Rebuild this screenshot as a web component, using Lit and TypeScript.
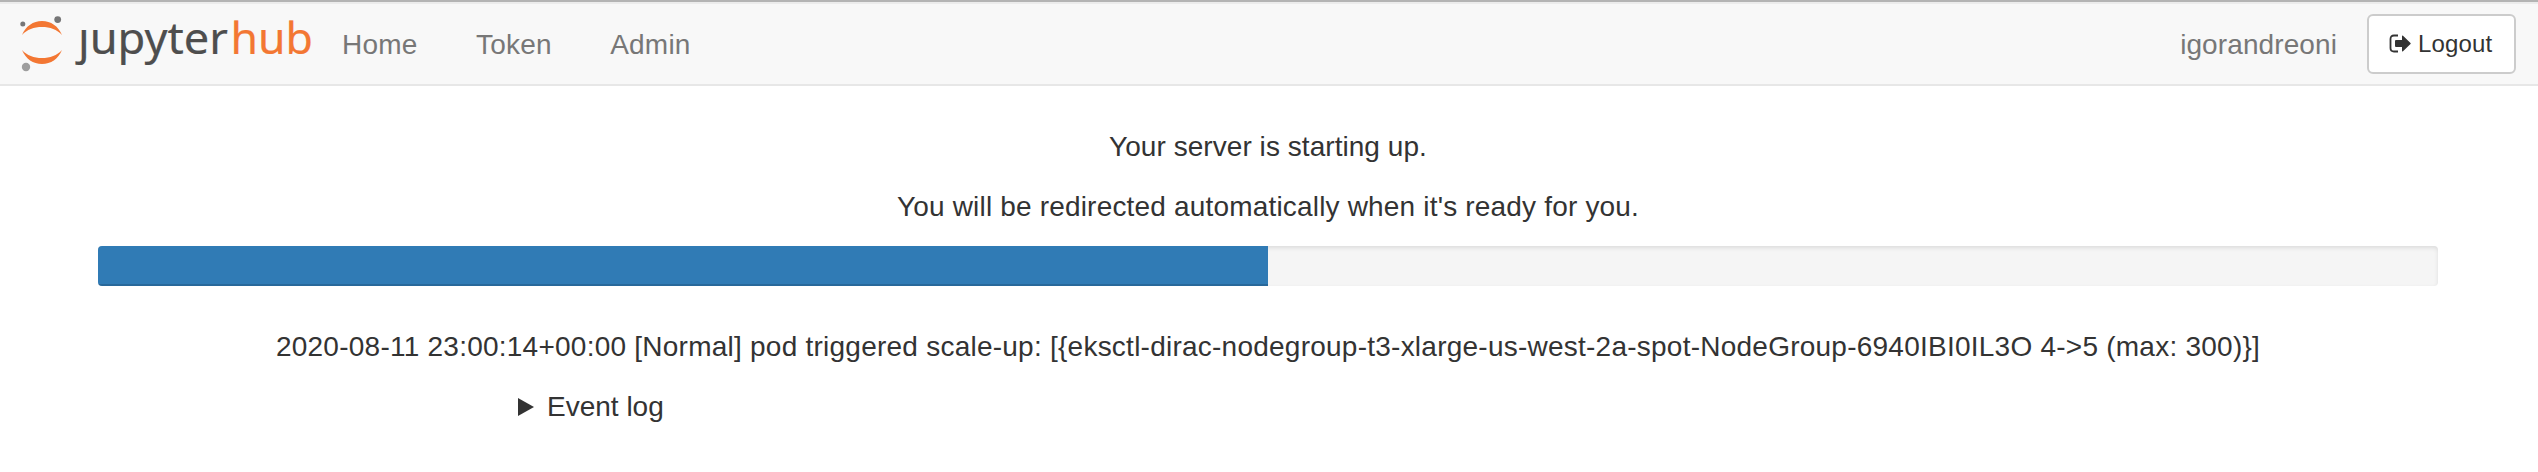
import { LitElement, html, css } from "lit";
import { customElement, property } from "lit/decorators.js";

@customElement("hub-logo")
class HubLogo extends LitElement {
  static styles = css`
    :host { display: block; width: 320px; height: 80px; }
    svg { display: block; }
    .word { font-family: "Noto Sans", "Open Sans", sans-serif; font-size: 44.5px; stroke-width: 0.2px; }
    .dark { fill: #4e4e4e; stroke: #4e4e4e; }
    .orange { fill: #f37733; stroke: #f37733; }
  `;
  render() {
    return html`<svg width="320" height="80" viewBox="0 2 320 80" role="img" aria-label="jupyterhub">
      <g fill="#f37733">
        <path d="M22 35C26 26 33 21 42 21C51 21 58 26 62 35C57 29.500 50 27 42 27C34 27 27 29.500 22 35Z" />
        <path d="M22 50C26 59 33 64 42 64C51 64 58 59 62 50C57 55.500 50 58 42 58C34 58 27 55.500 22 50Z" />
      </g>
      <circle cx="57.700" cy="19.600" r="3.400" fill="#767677" />
      <circle cx="22.800" cy="24" r="2.500" fill="#767677" />
      <circle cx="26" cy="67" r="4.200" fill="#9e9e9e" />
      <text class="word dark" y="54.300" x="78" textLength="150" lengthAdjust="spacingAndGlyphs">ȷupyter</text>
      <text class="word orange" y="54.300" x="230.500" textLength="82.500" lengthAdjust="spacingAndGlyphs">hub</text>
    </svg>`;
  }
}

@customElement("hub-progress")
class HubProgress extends LitElement {
  @property({ type: Number }) value = 0;
  static styles = css`
    :host { display: block; }
    .track {
      height: 40px; overflow: hidden; border-radius: 4px; background: #f5f5f5;
      box-shadow: inset 0 2px 4px rgba(0, 0, 0, 0.1);
    }
    .fill { height: 100%; background: #307bb5; box-shadow: inset 0 -2px 0 rgba(0, 0, 0, 0.15); }
  `;
  render() {
    return html`<div class="track" role="progressbar"><div class="fill" style="width:${this.value}%"></div></div>`;
  }
}

@customElement("app-root")
class AppRoot extends LitElement {
  static styles = css`
    :host {
      display: block; min-height: 472px; background: #fff; color: #333;
      font: 28px/40px "Liberation Sans", Arial, sans-serif;
    }
    nav {
      box-sizing: border-box; height: 86px; display: flex; align-items: flex-start;
      padding: 0 22px 0 0; background: #f8f8f8; border-top: 2px solid #b4b4b4;
      border-bottom: 2px solid #e7e7e7; color: #777; box-shadow: inset 0 2px 0 #ececec;
    }
    .links { display: flex; gap: 58.5px; margin: 23px auto 0 22px; letter-spacing: 0.2px; }
    .user { margin: 23px 30px 0 0; letter-spacing: 0.1px; }
    .logout {
      box-sizing: border-box; display: flex; align-items: center; height: 60px; width: 149px;
      margin-top: 12px; padding: 0 20px; border: 2px solid #ccc; border-radius: 6px;
      background: #fff; color: #333; font: 24px/36px "Liberation Sans", Arial, sans-serif;
      letter-spacing: 0.15px;
    }
    .logout svg { flex: none; margin-right: 6px; }
    main { padding: 41px 100px 0 98px; text-align: center; }
    p { margin: 0 0 20px; letter-spacing: 0.05px; }
    .redirect { margin-bottom: 19px; letter-spacing: 0.18px; }
    .event { letter-spacing: 0.24px; }
    hub-progress { margin-bottom: 41px; }
    .log { display: flex; align-items: center; margin-left: 420px; }
    .log svg { margin-right: 13px; }
  `;
  render() {
    return html`
      <nav>
        <hub-logo></hub-logo>
        <div class="links"><span>Home</span><span>Token</span><span>Admin</span></div>
        <span class="user">igorandreoni</span>
        <button class="logout">
          <svg width="23" height="20" viewBox="0 0 23 20">
            <path d="M9 1.500H5Q1.500 1.500 1.500 5V14Q1.500 17.500 5 17.500H9" fill="none" stroke="#333" stroke-width="1.800" />
            <path d="M7 6H13V2.200Q13 1 14 1.800L21.500 9Q22 9.500 21.500 10L14 17.200Q13 18 13 16.800V13H7Q6 13 6 12V7Q6 6 7 6Z" fill="#333" />
          </svg>Logout
        </button>
      </nav>
      <main>
        <p>Your server is starting up.</p>
        <p class="redirect">You will be redirected automatically when it's ready for you.</p>
        <hub-progress .value=${50}></hub-progress>
        <p class="event">2020-08-11 23:00:14+00:00 [Normal] pod triggered scale-up: [{eksctl-dirac-nodegroup-t3-xlarge-us-west-2a-spot-NodeGroup-6940IBI0IL3O 4-&gt;5 (max: 300)}]</p>
        <div class="log">
          <svg width="16" height="18" viewBox="0 0 16 18"><path d="M0 0L16 9L0 18Z" fill="#333" /></svg>
          <span>Event log</span>
        </div>
      </main>
    `;
  }
}
